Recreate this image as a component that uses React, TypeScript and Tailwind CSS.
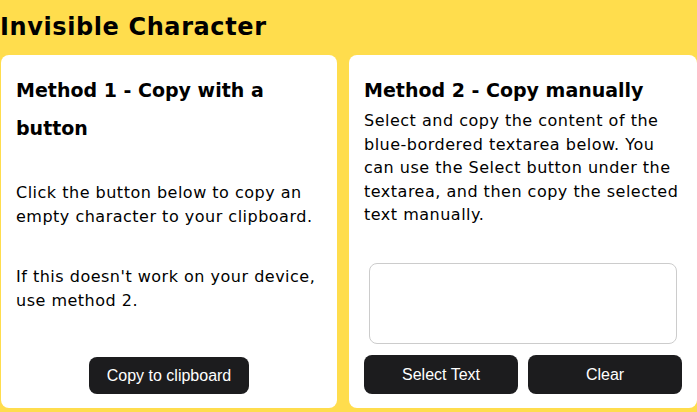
import { useRef, useState } from "react";

const INVISIBLE = "\u3164";

export default function App() {
  const areaRef = useRef<HTMLTextAreaElement>(null);
  const [value, setValue] = useState("");

  const copy = () => {
    navigator.clipboard?.writeText(INVISIBLE).catch(() => {});
  };

  return (
    <div className="h-[412px] w-[697px] overflow-hidden bg-[#ffdd4d] font-['DejaVu_Sans',Verdana,sans-serif] text-black">
      <h1 className="pt-[13px] pb-[14px] text-[24px] font-bold leading-[28px] tracking-[0.6px]">
        Invisible Character
      </h1>

      <div className="flex gap-[12px] pl-[1px]">
        {/* method 1 */}
        <section className="flex h-[353px] w-[336px] flex-col rounded-[8px] bg-white px-[15px] pt-[16px] pb-[14px]">
          <h2 className="text-[19px] font-bold leading-[38px]">
            Method 1 - Copy with a button
          </h2>
          <p className="mt-[34px] text-[16px] leading-[23.5px] tracking-[0.5px]">
            Click the button below to copy an empty character to your clipboard.
          </p>
          <p className="mt-[37px] text-[16px] leading-[23.5px] tracking-[0.5px]">
            If this doesn't work on your device, use method 2.
          </p>
          <button
            onClick={copy}
            className="mx-auto mt-auto h-[37px] w-[160px] rounded-[8px] bg-[#1c1c1e] font-['Liberation_Sans',Arial,sans-serif] text-[16px] text-white"
          >
            Copy to clipboard
          </button>
        </section>

        {/* method 2 */}
        <section className="flex h-[353px] flex-1 flex-col rounded-[8px] bg-white px-[15px] pt-[16px] pb-[14px]">
          <h2 className="text-[19px] font-bold leading-[38px]">
            Method 2 - Copy manually
          </h2>
          <p className="text-[16px] leading-[23.5px] tracking-[0.5px]">
            Select and copy the content of the blue-bordered textarea below. You
            can use the Select button under the textarea, and then copy the
            selected text manually.
          </p>
          <textarea
            ref={areaRef}
            value={value}
            onChange={(e) => setValue(e.target.value)}
            className="mx-[5px] mt-[36px] h-[81px] resize-none rounded-[8px] border border-[#cccccc] bg-white p-2 outline-none"
          />
          <div className="mt-auto flex gap-[10px]">
            <button
              onClick={() => areaRef.current?.select()}
              className="h-[39px] flex-1 rounded-[8px] bg-[#1c1c1e] font-['Liberation_Sans',Arial,sans-serif] text-[16px] text-white"
            >
              Select Text
            </button>
            <button
              onClick={() => setValue("")}
              className="h-[39px] flex-1 rounded-[8px] bg-[#1c1c1e] font-['Liberation_Sans',Arial,sans-serif] text-[16px] text-white"
            >
              Clear
            </button>
          </div>
        </section>
      </div>
    </div>
  );
}
